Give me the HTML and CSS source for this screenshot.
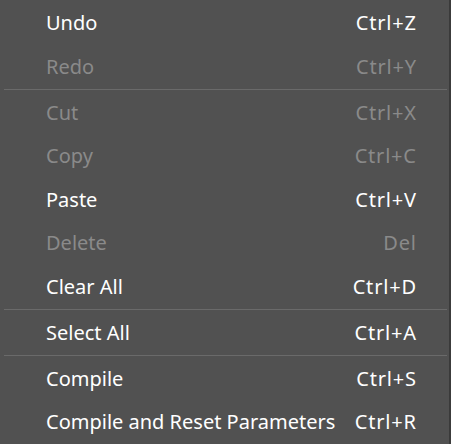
FILE: index.html
```html
<!DOCTYPE html>
<html>
<head>
<meta charset="utf-8">
<link rel="stylesheet" href="styles.css">
</head>
<body>
<div class="menu">
  <div class="item"><span class="label">Undo</span><span class="key">Ctrl+Z</span></div>
  <div class="item disabled"><span class="label">Redo</span><span class="key">Ctrl+Y</span></div>
  <div class="sep"></div>
  <div class="item disabled"><span class="label">Cut</span><span class="key">Ctrl+X</span></div>
  <div class="item disabled"><span class="label">Copy</span><span class="key">Ctrl+C</span></div>
  <div class="item"><span class="label">Paste</span><span class="key">Ctrl+V</span></div>
  <div class="item disabled"><span class="label">Delete</span><span class="key">Del</span></div>
  <div class="item"><span class="label">Clear All</span><span class="key">Ctrl+D</span></div>
  <div class="sep"></div>
  <div class="item"><span class="label">Select All</span><span class="key">Ctrl+A</span></div>
  <div class="sep"></div>
  <div class="item"><span class="label">Compile</span><span class="key">Ctrl+S</span></div>
  <div class="item"><span class="label">Compile and Reset Parameters</span><span class="key">Ctrl+R</span></div>
</div>
</body>
</html>
```
FILE: styles.css
```css
html, body {
  margin: 0;
  padding: 0;
  background: #3c3c3c;
  overflow: hidden;
  height: 444px;
}
.menu {
  width: 449px;
  background: #515151;
  border-right: 1px solid #3a3a3a;
  border-bottom: 1px solid #3a3a3a;
  display: flex;
  flex-direction: column;
  padding-top: 1px;
  font-family: "Noto Sans", "Open Sans", sans-serif;
  font-size: 20px;
  color: #ffffff;
}
.item {
  height: 43.5px;
  flex: none;
  display: flex;
  align-items: center;
  justify-content: space-between;
  padding: 0 33px 0 46px;
  box-sizing: border-box;
}
.item.disabled {
  color: #8a8a8a;
}
.key {
  letter-spacing: 0.8px;
  margin-right: -0.8px;
}
.sep {
  flex: none;
  height: 1px;
  margin: 1px 2px 0.5px 4px;
  background: #6a6a6a;
}
```
